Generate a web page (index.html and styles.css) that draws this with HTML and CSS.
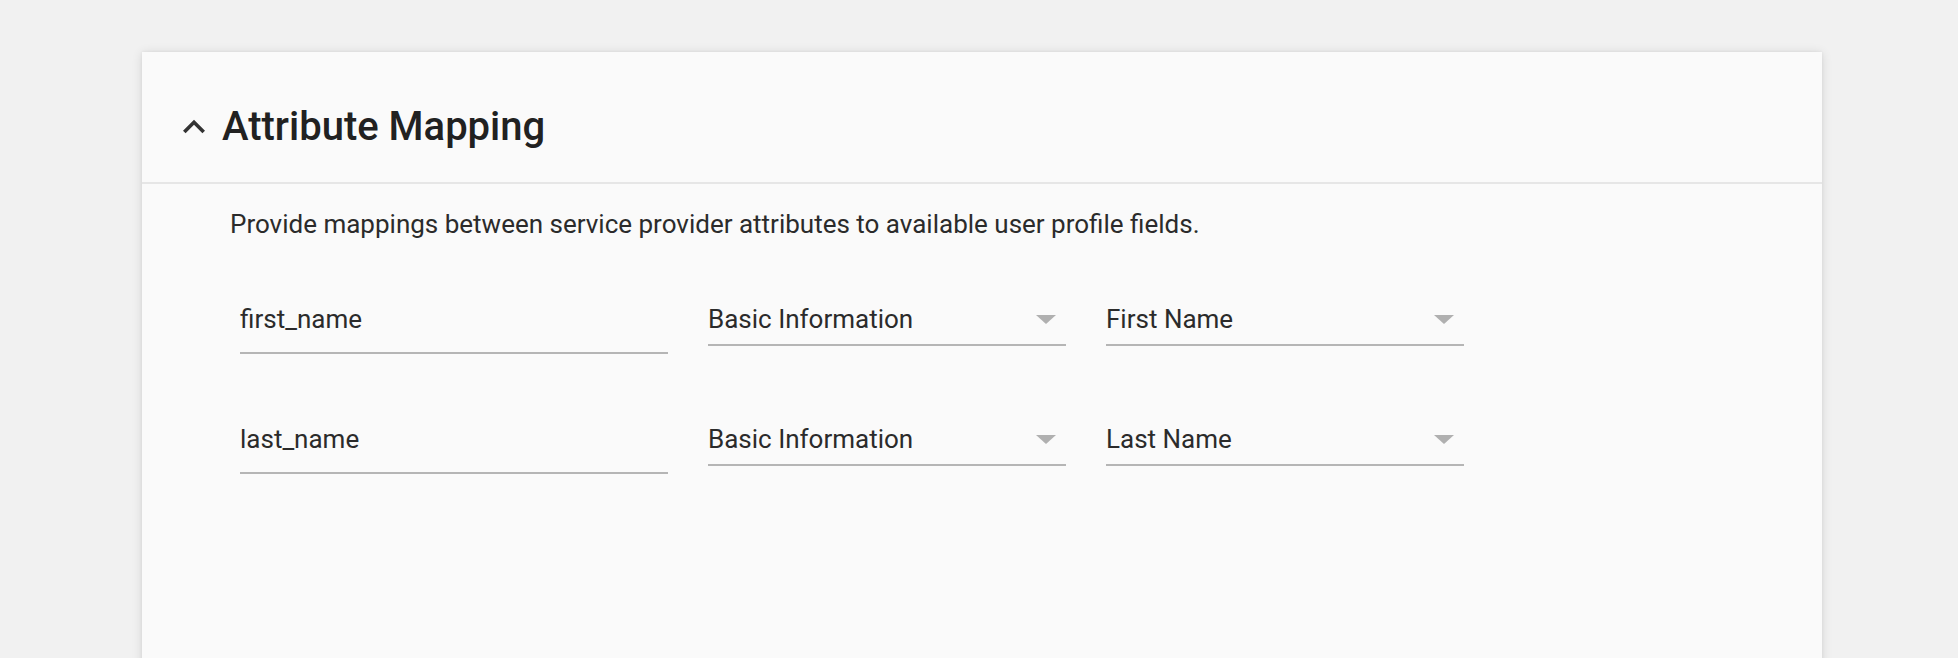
FILE: index.html
```html
<!DOCTYPE html>
<html lang="en">
<head>
<meta charset="utf-8">
<title>Attribute Mapping</title>
<link rel="stylesheet" href="styles.css">
</head>
<body>
<div class="page">
  <section class="card">
    <header class="card-header">
      <svg class="chevron" viewBox="0 0 24 24" width="44" height="44" aria-hidden="true">
        <path d="M12 8l-6 6 1.41 1.41L12 10.83l4.59 4.58L18 14z" fill="#333"/>
      </svg>
      <h2 class="title">Attribute Mapping</h2>
    </header>
    <div class="card-body">
      <p class="description">Provide mappings between service provider attributes to available user profile fields.</p>
      <div class="rows">
        <div class="row">
          <div class="text-field">first_name</div>
          <div class="select"><span class="select-value">Basic Information</span><span class="arrow"></span></div>
          <div class="select"><span class="select-value">First Name</span><span class="arrow"></span></div>
        </div>
        <div class="row">
          <div class="text-field">last_name</div>
          <div class="select"><span class="select-value">Basic Information</span><span class="arrow"></span></div>
          <div class="select"><span class="select-value">Last Name</span><span class="arrow"></span></div>
        </div>
      </div>
    </div>
  </section>
</div>
</body>
</html>
```

FILE: styles.css
```css
html, body {
  margin: 0;
  padding: 0;
  height: 100%;
  background: #f1f1f1;
  overflow: hidden;
}

body {
  font-family: Roboto, "Noto Sans", "Liberation Sans", sans-serif;
  color: #2b2b2b;
}

.page {
  padding: 52px 136px 0 142px;
}

.card {
  background: #fafafa;
  box-shadow: 0 1px 10px rgba(0, 0, 0, 0.12), 0 0 3px rgba(0, 0, 0, 0.06);
  min-height: 700px;
}

.card-header {
  display: flex;
  align-items: center;
  padding: 51px 30px 31px 30px;
  border-bottom: 2px solid #e6e6e6;
}

.chevron {
  display: block;
  flex: none;
  margin-right: 6px;
}

.title {
  margin: 0;
  font-size: 40px;
  line-height: 48px;
  font-weight: 500;
  color: #212121;
}

.card-body {
  padding: 24px 88px 0 88px;
}

.description {
  margin: 0;
  font-size: 26px;
  line-height: 32px;
  color: #2b2b2b;
}

.rows {
  display: flex;
  flex-direction: column;
  gap: 69px;
  margin-top: 63px;
  padding-left: 10px;
}

.row {
  display: flex;
  align-items: flex-start;
  gap: 40px;
}

.text-field {
  width: 428px;
  font-size: 26px;
  line-height: 32px;
  padding: 0 0 17px 0;
  border-bottom: 2px solid #b5b5b5;
  color: #2b2b2b;
  box-sizing: border-box;
}

.select {
  width: 358px;
  display: flex;
  align-items: center;
  justify-content: space-between;
  font-size: 26px;
  line-height: 32px;
  padding: 0 10px 9px 0;
  border-bottom: 2px solid #b5b5b5;
  box-sizing: border-box;
  color: #2b2b2b;
}

.arrow {
  width: 0;
  height: 0;
  border-left: 10px solid transparent;
  border-right: 10px solid transparent;
  border-top: 9px solid #b0b0b0;
}
```
